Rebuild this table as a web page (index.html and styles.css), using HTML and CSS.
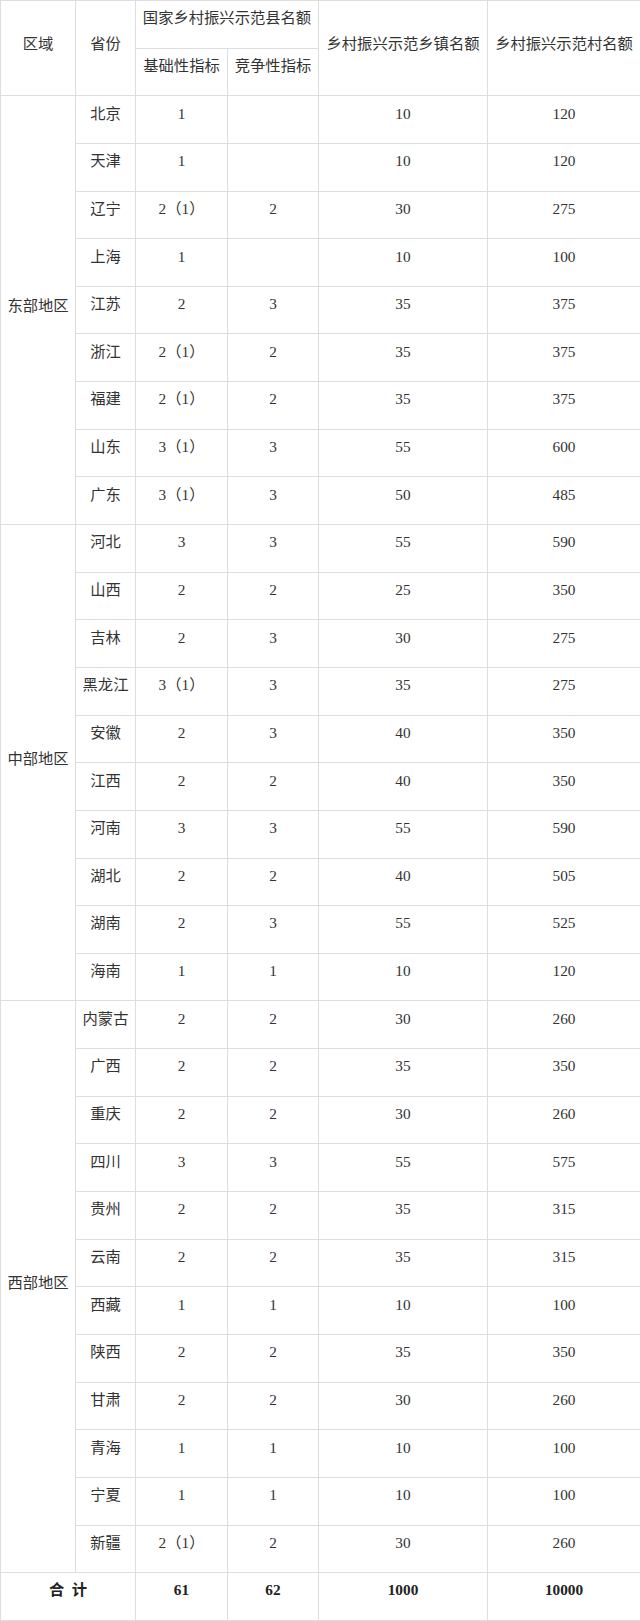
FILE: index.html
```html
<!DOCTYPE html>
<html lang="zh-CN">
<head>
<meta charset="utf-8">
<title>乡村振兴示范名额分配表</title>
<link rel="stylesheet" href="styles.css">
</head>
<body>
<table class="quota">
  <colgroup>
    <col class="c-region"><col class="c-prov"><col class="c-base"><col class="c-comp"><col class="c-town"><col class="c-village">
  </colgroup>
  <thead>
    <tr>
      <td class="merged" rowspan="2">区域</td>
      <td class="merged" rowspan="2">省份</td>
      <td colspan="2">国家乡村振兴示范县名额</td>
      <td class="merged" rowspan="2">乡村振兴示范乡镇名额</td>
      <td class="merged" rowspan="2">乡村振兴示范村名额</td>
    </tr>
    <tr>
      <td>基础性指标</td>
      <td>竞争性指标</td>
    </tr>
  </thead>
  <tbody>
    <tr><td class="merged" rowspan="9">东部地区</td><td>北京</td><td>1</td><td></td><td>10</td><td>120</td></tr>
    <tr><td>天津</td><td>1</td><td></td><td>10</td><td>120</td></tr>
    <tr><td>辽宁</td><td>2（1）</td><td>2</td><td>30</td><td>275</td></tr>
    <tr><td>上海</td><td>1</td><td></td><td>10</td><td>100</td></tr>
    <tr><td>江苏</td><td>2</td><td>3</td><td>35</td><td>375</td></tr>
    <tr><td>浙江</td><td>2（1）</td><td>2</td><td>35</td><td>375</td></tr>
    <tr><td>福建</td><td>2（1）</td><td>2</td><td>35</td><td>375</td></tr>
    <tr><td>山东</td><td>3（1）</td><td>3</td><td>55</td><td>600</td></tr>
    <tr><td>广东</td><td>3（1）</td><td>3</td><td>50</td><td>485</td></tr>

    <tr><td class="merged" rowspan="10">中部地区</td><td>河北</td><td>3</td><td>3</td><td>55</td><td>590</td></tr>
    <tr><td>山西</td><td>2</td><td>2</td><td>25</td><td>350</td></tr>
    <tr><td>吉林</td><td>2</td><td>3</td><td>30</td><td>275</td></tr>
    <tr><td>黑龙江</td><td>3（1）</td><td>3</td><td>35</td><td>275</td></tr>
    <tr><td>安徽</td><td>2</td><td>3</td><td>40</td><td>350</td></tr>
    <tr><td>江西</td><td>2</td><td>2</td><td>40</td><td>350</td></tr>
    <tr><td>河南</td><td>3</td><td>3</td><td>55</td><td>590</td></tr>
    <tr><td>湖北</td><td>2</td><td>2</td><td>40</td><td>505</td></tr>
    <tr><td>湖南</td><td>2</td><td>3</td><td>55</td><td>525</td></tr>
    <tr><td>海南</td><td>1</td><td>1</td><td>10</td><td>120</td></tr>

    <tr><td class="merged" rowspan="12">西部地区</td><td>内蒙古</td><td>2</td><td>2</td><td>30</td><td>260</td></tr>
    <tr><td>广西</td><td>2</td><td>2</td><td>35</td><td>350</td></tr>
    <tr><td>重庆</td><td>2</td><td>2</td><td>30</td><td>260</td></tr>
    <tr><td>四川</td><td>3</td><td>3</td><td>55</td><td>575</td></tr>
    <tr><td>贵州</td><td>2</td><td>2</td><td>35</td><td>315</td></tr>
    <tr><td>云南</td><td>2</td><td>2</td><td>35</td><td>315</td></tr>
    <tr><td>西藏</td><td>1</td><td>1</td><td>10</td><td>100</td></tr>
    <tr><td>陕西</td><td>2</td><td>2</td><td>35</td><td>350</td></tr>
    <tr><td>甘肃</td><td>2</td><td>2</td><td>30</td><td>260</td></tr>
    <tr><td>青海</td><td>1</td><td>1</td><td>10</td><td>100</td></tr>
    <tr><td>宁夏</td><td>1</td><td>1</td><td>10</td><td>100</td></tr>
    <tr><td>新疆</td><td>2（1）</td><td>2</td><td>30</td><td>260</td></tr>

    <tr class="total"><td colspan="2">合&nbsp;&nbsp;计</td><td>61</td><td>62</td><td>1000</td><td>10000</td></tr>
  </tbody>
</table>
</body>
</html>
```
FILE: styles.css
```css
html, body {
  margin: 0;
  padding: 0;
  background: #ffffff;
}

.quota {
  border-collapse: collapse;
  table-layout: fixed;
  width: 640px;
  font-family: "Liberation Serif", "Noto Sans CJK SC", serif;
  font-size: 15.3px;
  color: #333333;
}

.c-region { width: 75px; }
.c-prov { width: 60px; }
.c-base { width: 92px; }
.c-comp { width: 91px; }
.c-town { width: 169px; }
.c-village { width: 153px; }

.quota tr {
  height: 47.65px;
}

.quota td {
  border: 1px solid #dedede;
  padding: 6px 2px 18px;
  line-height: 22px;
  text-align: center;
  vertical-align: middle;
  white-space: nowrap;
  overflow: hidden;
}

.quota td.merged {
  padding: 8px 2px 16px;
}

.total td {
  font-weight: bold;
  color: #222222;
}
```
